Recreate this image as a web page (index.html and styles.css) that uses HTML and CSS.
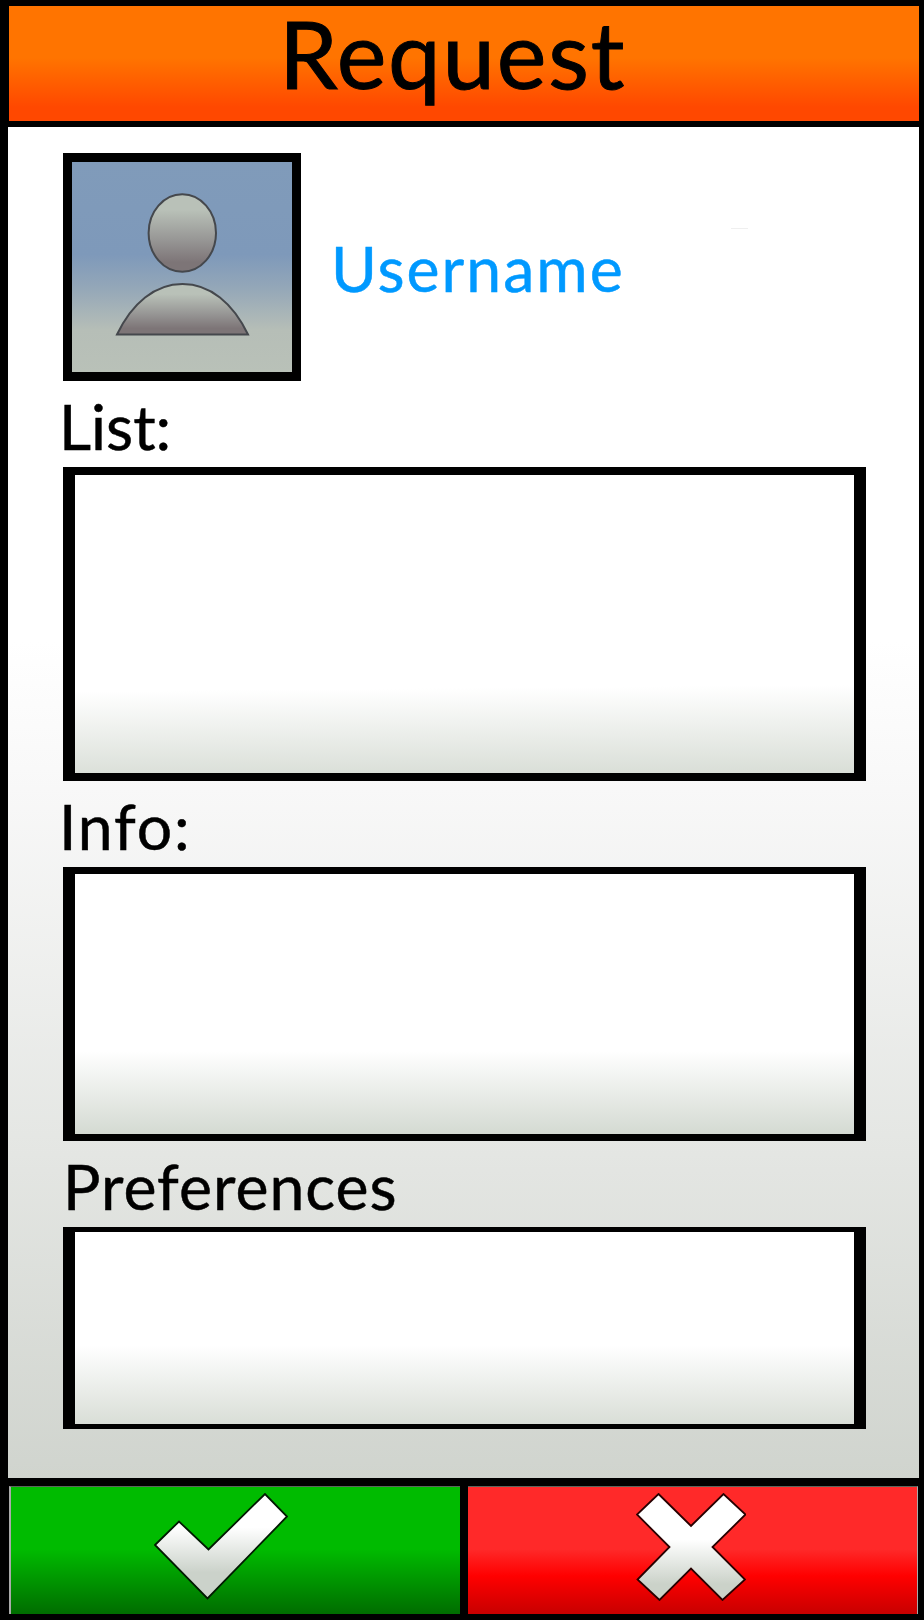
FILE: index.html
```html
<!DOCTYPE html>
<html lang="en">
<head>
<meta charset="utf-8">
<title>Request</title>
<link rel="stylesheet" href="styles.css">
</head>
<body>
<div class="screen">
  <header class="header"><h1 class="title">Request</h1></header>
  <main class="content">
    <section class="profile">
      <div class="avatar">
        <svg viewBox="0 0 220 210" width="220" height="210" aria-hidden="true">
          <defs>
            <linearGradient id="person" x1="0" y1="0" x2="0" y2="1">
              <stop offset=".2" stop-color="#b9c1b8"/>
              <stop offset=".6" stop-color="#969594"/>
              <stop offset=".88" stop-color="#7d7577"/>
            </linearGradient>
          </defs>
          <g fill="url(#person)" stroke="#45484d" stroke-width="2">
            <ellipse cx="110.300" cy="71" rx="33.700" ry="38.700"/>
            <path d="M45 172.500C60 141 83 122 110.500 122S161 141 176 172.500Z"/>
          </g>
        </svg>
      </div>
      <span class="username">Username</span>
      <span class="dash"></span>
    </section>
    <h2 class="label label-list">List:</h2>
    <div class="box box-list"></div>
    <h2 class="label label-info">Info:</h2>
    <div class="box box-info"></div>
    <h2 class="label label-preferences">Preferences</h2>
    <div class="box box-preferences"></div>
  </main>
  <footer class="actions">
    <button class="action accept" aria-label="Accept">
      <svg viewBox="0 0 134 108" width="134" height="108" aria-hidden="true">
        <defs>
          <linearGradient id="tick" x1="0" y1="0" x2="0" y2="1">
            <stop offset=".32" stop-color="#fff"/>
            <stop offset=".75" stop-color="#cbd2ca"/>
          </linearGradient>
        </defs>
        <path d="M1 52L25 28.500L54.500 56.500L111 1L133 23.500L53.500 105.500Z" fill="url(#tick)" stroke="#021a02" stroke-width="1.800"/>
      </svg>
    </button>
    <button class="action decline" aria-label="Decline">
      <svg viewBox="0 0 110 108" width="110" height="108" aria-hidden="true">
        <defs>
          <linearGradient id="cross" x1="0" y1="0" x2="0" y2="1">
            <stop offset=".43" stop-color="#fff"/>
            <stop offset=".85" stop-color="#cbd2c9"/>
          </linearGradient>
        </defs>
        <path d="M22.500 1L55 33L87.500 1L109.500 21.500L76.500 54L109 86.500L86.500 107L55 75.500L23.500 107L1.500 86.500L33.500 54L1 21.500Z" fill="url(#cross)" stroke="#280000" stroke-width="1.800"/>
      </svg>
    </button>
  </footer>
</div>
</body>
</html>
```
FILE: styles.css
```css
* { box-sizing: border-box; }
body { margin: 0; background: #000; font-family: Lato, "Liberation Sans", sans-serif; color: #000; }
.screen { width: 924px; height: 1620px; padding: 6px 5px 6px 8px; display: flex; flex-direction: column; }
.header { height: 115px; margin-left: 1px; background: linear-gradient(180deg, #ff7400 45%, #ff4800 88%); }
.title { margin: 0; padding-left: 270px; font-size: 94px; line-height: 94px; height: 115px; font-weight: 400; letter-spacing: 1.800px; white-space: nowrap; -webkit-text-stroke: 1px #000; }
.content { height: 1351px; margin-top: 6px; padding: 26px 53px 0 55px; display: flex; flex-direction: column; background: linear-gradient(180deg, #fff 38%, #f8f8f8 49%, #e4e6e3 76%, #d0d4ce 100%); }
.profile { height: 228px; display: flex; align-items: flex-start; }
.avatar { width: 238px; height: 228px; flex: none; border: 9px solid #000; background: linear-gradient(180deg, #809bba 0%, #7e99ba 44%, #94a7b8 60%, #b6beb7 80%, #b9c1b8 100%); }
.avatar svg { display: block; }
.username { width: 300px; flex: none; margin-left: 30px; font-size: 62.500px; line-height: 230px; letter-spacing: 2px; color: #09f; -webkit-text-stroke: .5px #09f; }
.dash { width: 17px; height: 1px; margin: 75px 0 0 100px; background: #efefef; }
.label { margin: 0; height: 86px; font-size: 62.500px; font-weight: 400; line-height: 89px; white-space: nowrap; -webkit-text-stroke: .5px #000; }
.label-list { margin-left: -4px; }
.label-info { margin-left: -4px; letter-spacing: 1.800px; }
.label-preferences { letter-spacing: 1px; }
.box { border: solid #000; border-width: 8px 12px; }
.box-list { height: 314px; background: linear-gradient(179.500deg, #fff 71%, #dadfd8 99%) padding-box; }
.box-info { height: 274px; border-width: 7px 12px; background: linear-gradient(180deg, #fff 68%, #d4dad2 100%) padding-box; }
.box-preferences { height: 202px; border-width: 5px 12px; background: linear-gradient(180deg, #fff 59%, #d9ded7 100%) padding-box; }
.actions { margin-top: 8px; height: 128px; display: flex; gap: 8px; padding: 0 1px; }
.action { height: 128px; border: 0; border-top: 1px solid #5d655c; padding: 6px 0 0; display: flex; align-items: flex-start; }
.accept { width: 451px; border-left: 2px solid #aaa; padding-left: 143px; background: linear-gradient(180deg, #0b0 49%, #006d00 100%); }
.decline { width: 450px; border-right: 1px solid #aaa; padding-left: 168px; background: linear-gradient(180deg, #ff2929 49%, #f00 70%, #c80000 100%); }
```
